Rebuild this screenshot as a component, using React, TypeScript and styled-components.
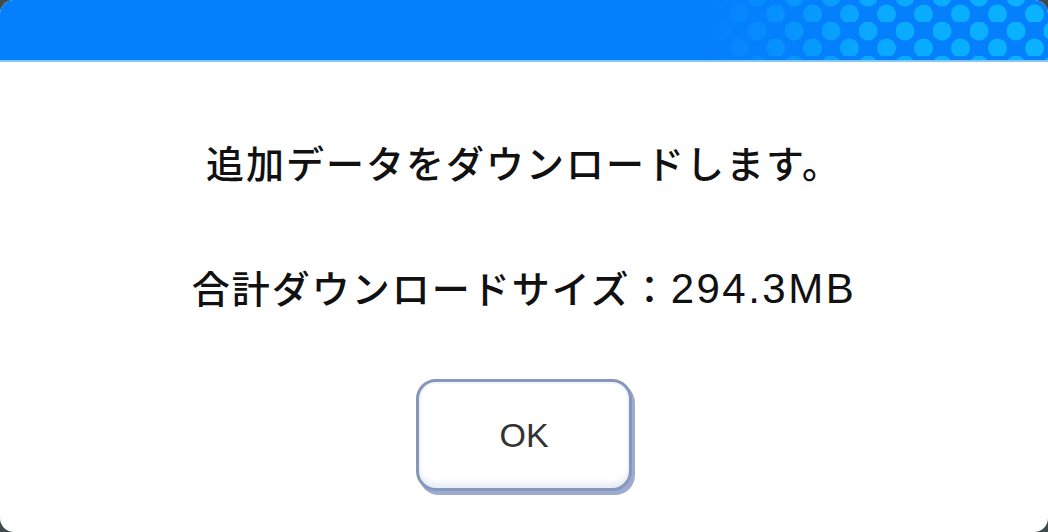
import React from 'react'
import styled, { createGlobalStyle } from 'styled-components'

const GlobalStyle = createGlobalStyle`
  html, body {
    margin: 0;
    padding: 0;
    background: #3f4a4c;
  }
  body {
    font-family: 'Liberation Sans', 'Noto Sans CJK JP', sans-serif;
  }
`

const Dialog = styled.div`
  width: 1048px;
  height: 532px;
  display: flex;
  flex-direction: column;
  background: #ffffff;
  border-radius: 14px;
  overflow: hidden;
`

const Header = styled.div`
  position: relative;
  height: 60px;
  flex: none;
  background: #0580fd;
  border-bottom: 2px solid #86c6ff;
  overflow: hidden;

  svg {
    display: block;
  }
`

const Body = styled.div`
  flex: 1;
  display: flex;
  flex-direction: column;
  align-items: center;
  padding-top: 80px;
`

interface MessageProps {
  gap?: number
}

const Message = styled.p<MessageProps>`
  margin: 0 0 ${props => props.gap ?? 0}px;
  font-size: 38px;
  font-weight: 500;
  line-height: 46px;
  color: #111;
  letter-spacing: 2px;
  white-space: nowrap;
`

const Size = styled.span`
  font-size: 42px;
  font-weight: 400;
  letter-spacing: 2.5px;
`

const OkButton = styled.button`
  width: 216px;
  height: 112px;
  box-sizing: border-box;
  border: 3px solid #8796bb;
  border-radius: 20px;
  background: #ffffff;
  box-shadow: 3px 4px 0 #9eabd0, inset 0 -7px 6px -2px #e6ecf6, inset 0 0 0 2px #f4f6fb;
  font-family: 'Liberation Sans', 'Noto Sans CJK JP', sans-serif;
  font-size: 34px;
  color: #333;
  cursor: pointer;
  padding: 0;
`

// halftone dots on the right half of the title bar, fading out to the left
const HeaderDots = () => (
  <svg width="1048" height="60" viewBox="0 0 1048 60">
    <defs>
      <pattern id="dots" width="37" height="34" patternUnits="userSpaceOnUse" x="8" y="-12">
        <circle cx="9" cy="9" r="9.5" fill="#0bb3ff" />
        <circle cx="27.5" cy="26" r="9.5" fill="#0bb3ff" />
      </pattern>
      <linearGradient id="fade" x1="0" x2="1" y1="0" y2="0">
        <stop offset="0.68" stopColor="#fff" stopOpacity="0" />
        <stop offset="0.83" stopColor="#fff" stopOpacity="0.8" />
        <stop offset="1" stopColor="#fff" stopOpacity="1" />
      </linearGradient>
      <mask id="fadeMask">
        <rect width="1048" height="60" fill="url(#fade)" />
      </mask>
    </defs>
    <rect width="1048" height="60" fill="url(#dots)" mask="url(#fadeMask)" />
  </svg>
)

export default function App() {
  return (
    <>
      <GlobalStyle />
      <Dialog>
        <Header>
          <HeaderDots />
        </Header>
        <Body>
          <Message gap={78}>追加データをダウンロードします。</Message>
          <Message gap={66}>
            合計ダウンロードサイズ：<Size>294.3MB</Size>
          </Message>
          <OkButton>OK</OkButton>
        </Body>
      </Dialog>
    </>
  )
}
